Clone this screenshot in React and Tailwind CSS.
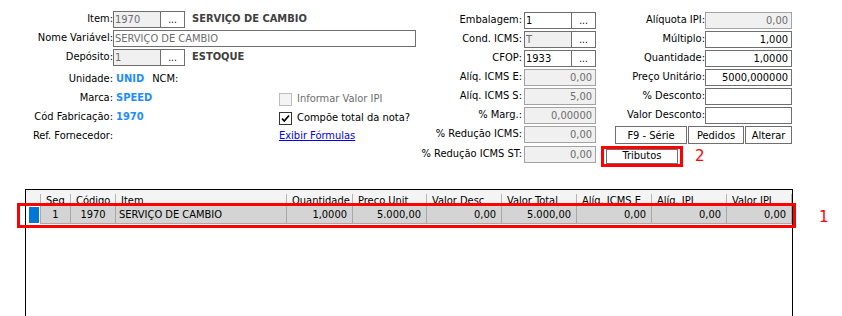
import React from "react";

const Label = ({ children, w }) => (
  <div className={`${w} shrink-0 text-right whitespace-nowrap`}>{children}</div>
);

const Inp = ({ value = "", w, gray, dim, right, light }) => (
  <div
    className={`${w} h-[17px] shrink-0 border ${light ? "border-[#a3a3a3]" : "border-[#6f6f6f]"} ${gray ? "bg-[#f0f0f0]" : "bg-white"} ${dim ? "text-[#6d6d6d]" : "text-black"} ${right ? "text-right pr-[3px]" : "pl-[1px]"} leading-[15px] whitespace-nowrap overflow-hidden`}
  >
    {value}
  </div>
);

const Dots = () => (
  <div className="w-[24px] h-[17px] shrink-0 border border-l-0 border-[#6f6f6f] bg-white flex items-center justify-center text-[10px] leading-none">
    ...
  </div>
);

const Btn = ({ children, w }) => (
  <div className={`${w} h-[18px] border border-[#6f6f6f] bg-[#fdfdfd] flex items-center justify-center leading-none`}>
    {children}
  </div>
);

const Blue = ({ children }) => (
  <span className="ml-[3px] font-bold text-[#1e8cff]">{children}</span>
);

const cols = [
  { w: "w-[14px]", h: "" },
  { w: "w-[30px]", h: "Seq" },
  { w: "w-[45px]", h: "Código" },
  { w: "w-[171px]", h: "Item" },
  { w: "w-[66px]", h: "Quantidade" },
  { w: "w-[74px]", h: "Preco Unit" },
  { w: "w-[75px]", h: "Valor Desc" },
  { w: "w-[75px]", h: "Valor Total" },
  { w: "w-[75px]", h: "Alíq. ICMS E" },
  { w: "w-[75px]", h: "Alíq. IPI" },
  { w: "w-[66px]", h: "Valor IPI" },
];

const row = ["", "1", "1970", "SERVIÇO DE CAMBIO", "1,0000", "5.000,00", "0,00", "5.000,00", "0,00", "0,00", "0,00"];

export default function App() {
  return (
    <div className="w-[842px] h-[316px] bg-white overflow-hidden text-[11px] text-black font-['DejaVu_Sans_Condensed','DejaVu_Sans',sans-serif]">
      <div className="flex items-start h-[167px]">
        {/* left block */}
        <div className="w-[416px] pt-[10px] shrink-0">
          <div className="h-[19px] flex items-center">
            <Label w="w-[113px]">Item:</Label>
            <Inp w="w-[48px]" value="1970" gray dim />
            <Dots />
            <span className="ml-[7px] font-bold text-[#404040]">SERVIÇO DE CAMBIO</span>
          </div>
          <div className="h-[19px] flex items-center">
            <Label w="w-[113px]">Nome Variável:</Label>
            <Inp w="w-[303px]" value="SERVIÇO DE CAMBIO" dim />
          </div>
          <div className="h-[19px] flex items-center">
            <Label w="w-[113px]">Depósito:</Label>
            <Inp w="w-[48px]" value="1" gray dim />
            <Dots />
            <span className="ml-[7px] font-bold text-[#404040]">ESTOQUE</span>
          </div>
          <div className="h-[19px] mt-[3px] flex items-center">
            <Label w="w-[113px]">Unidade:</Label>
            <Blue>UNID</Blue>
            <span className="ml-[8px]">NCM:</span>
          </div>
          <div className="h-[19px] flex items-center">
            <div className="w-[279px] flex items-center">
              <Label w="w-[113px]">Marca:</Label>
              <Blue>SPEED</Blue>
            </div>
            <div className="flex items-center mt-[2px] text-[#6d6d6d]">
              <div className="w-[13px] h-[13px] border border-[#bcbcbc] bg-[#f4f4f4]" />
              <span className="ml-[5px]">Informar Valor IPI</span>
            </div>
          </div>
          <div className="h-[19px] flex items-center">
            <div className="w-[279px] flex items-center">
              <Label w="w-[113px]">Cód Fabricação:</Label>
              <Blue>1970</Blue>
            </div>
            <div className="flex items-center mt-[2px]">
              <div className="w-[13px] h-[13px] border border-[#333] bg-white flex items-center justify-center">
                <svg width="9" height="9" viewBox="0 0 9 9">
                  <path d="M1 4.5 L3.3 7 L8 1.5" stroke="#000" strokeWidth="1.8" fill="none" />
                </svg>
              </div>
              <span className="ml-[5px]">Compõe total da nota?</span>
            </div>
          </div>
          <div className="h-[19px] flex items-center">
            <div className="w-[279px] flex items-center">
              <Label w="w-[113px]">Ref. Fornecedor:</Label>
            </div>
            <span className="text-[#0000ee] underline">Exibir Fórmulas</span>
          </div>
        </div>

        {/* middle block */}
        <div className="w-[180px] pt-[11px] shrink-0">
          {[
            ["Embalagem:", <><Inp w="w-[48px]" value="1" /><Dots /></>],
            ["Cond. ICMS:", <><Inp w="w-[48px]" value="T" gray dim /><Dots /></>],
            ["CFOP:", <><Inp w="w-[48px]" value="1933" /><Dots /></>],
            ["Alíq. ICMS E:", <Inp w="w-[72px]" value="0,00" gray dim right light />],
            ["Alíq. ICMS S:", <Inp w="w-[72px]" value="5,00" gray dim right light />],
            ["% Marg.:", <Inp w="w-[72px]" value="0,00000" gray dim right light />],
            ["% Redução ICMS:", <Inp w="w-[72px]" value="0,00" gray dim right light />],
            ["% Redução ICMS ST:", <Inp w="w-[72px]" value="0,00" gray dim right light />],
          ].map(([l, c], i) => (
            <div key={i} className={`h-[19px] flex items-center ${i === 7 ? "mt-[1px]" : ""}`}>
              <Label w="w-[108px] pr-[2px]">{l}</Label>
              {c}
            </div>
          ))}
        </div>

        {/* right block */}
        <div className="w-[196px] pt-[11px] shrink-0">
          {[
            ["Alíquota IPI:", "0,00", true],
            ["Múltiplo:", "1,000"],
            ["Quantidade:", "1,0000"],
            ["Preço Unitário:", "5000,000000"],
            ["% Desconto:", ""],
            ["Valor Desconto:", ""],
          ].map(([l, v, g], i) => (
            <div key={i} className="h-[19px] flex items-center">
              <Label w="w-[109px]">{l}</Label>
              <Inp w="w-[87px]" value={v} gray={g} dim={g} light={g} right />
            </div>
          ))}
          <div className="h-[19px] flex items-end justify-end gap-[1px]">
            <Btn w="w-[72px]">F9 - Série</Btn>
            <Btn w="w-[56px]">Pedidos</Btn>
            <Btn w="w-[47px]">Alterar</Btn>
          </div>
          <div className="mt-[2px] ml-[5px] flex items-center">
            <div className="w-[82px] h-[21px] border-[3px] border-[#ff0000] px-[2px]">
              <div className="h-[15px] border border-[#6f6f6f] bg-[#fdfdfd] flex items-start justify-center leading-[12px]">
                Tributos
              </div>
            </div>
            <span className="ml-[12px] text-[15px] leading-none text-[#ff0000] font-['DejaVu_Sans',sans-serif]">2</span>
          </div>
        </div>
      </div>

      {/* grid */}
      <div className="relative mt-[22px] ml-[25px] w-[768px] h-[140px] border-l border-t border-r border-black">
        <div className="h-[16px] flex items-end bg-[#f4f4f4]">
          {cols.map((c, i) => (
            <div
              key={i}
              className={`${c.w} h-[12px] overflow-hidden leading-[13px] pl-[5px] whitespace-nowrap ${i > 0 ? "border-l border-[#b4b4b4]" : ""} ${i === 10 ? "border-r" : ""}`}
            >
              {c.h}
            </div>
          ))}
        </div>
        <div className="h-[18px] flex">
          {row.map((v, i) => (
            <div
              key={i}
              className={`${cols[i].w} h-[18px] leading-[18px] whitespace-nowrap overflow-hidden ${
                i === 0
                  ? "bg-white flex items-center pl-[3px]"
                  : `bg-[#d4d4d4] border-l border-b border-[#a8a8a8] ${i === 1 || i === 2 ? "text-center" : i === 3 ? "pl-[3px]" : "text-right pr-[5px]"}`
              } ${i === 10 ? "border-r" : ""}`}
            >
              {i === 0 ? <div className="w-[10px] h-[16px] bg-[#0078d7]" /> : v}
            </div>
          ))}
        </div>
        <div className="absolute left-[-9px] top-[13px] w-[779px] h-[25px] border-[3px] border-[#ff0000]" />
        <span className="absolute left-[793px] top-[20px] text-[15px] leading-none text-[#ff0000] font-['DejaVu_Sans',sans-serif]">1</span>
      </div>
    </div>
  );
}
